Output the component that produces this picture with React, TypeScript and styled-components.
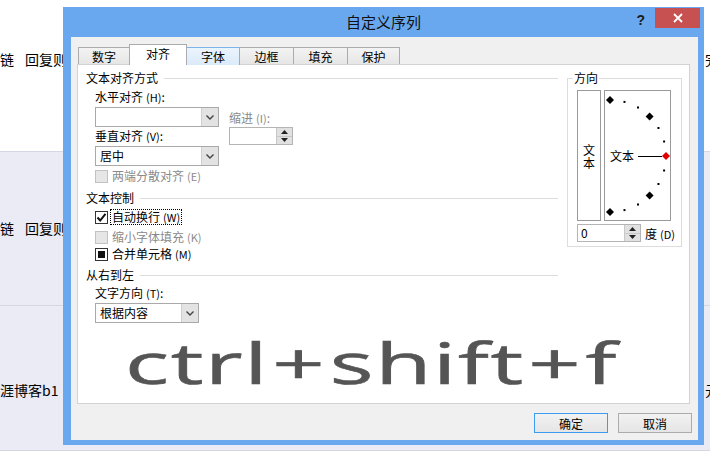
import React from "react";
import styled, { createGlobalStyle, css } from "styled-components";

const GlobalStyle = createGlobalStyle`
  html, body { margin: 0; padding: 0; }
  body {
    font-family: "Noto Sans CJK SC", "Noto Sans", sans-serif;
    font-size: 12px;
    color: #000;
  }
`;

const Desktop = styled.div`
  position: relative;
  width: 710px;
  height: 451px;
  overflow: hidden;
  display: flex;
  flex-direction: column;
  background: #eaebf4;
`;

const SheetRow = styled.div<{ $h?: number; $bg: string; $top: number }>`
  ${p => (p.$h ? css`height: ${p.$h}px;` : css`flex: 1;`)}
  flex-shrink: 0;
  background: ${p => p.$bg};
  border-bottom: 1px solid #d4d7e3;
  display: flex;
  justify-content: space-between;
  padding-top: ${p => p.$top}px;
  box-sizing: border-box;
  font-size: 14px;
  line-height: 18px;
`;

const Cell = styled.div`
  display: flex;
  gap: 11px;
  white-space: nowrap;
`;

const Edge = styled.div`
  width: 5px;
  overflow: hidden;
  white-space: nowrap;
`;

/* dialog window */
const Window = styled.div`
  position: absolute;
  left: 63px;
  top: 7px;
  width: 641px;
  height: 438px;
  background: #69a8ef;
  display: flex;
  flex-direction: column;
`;

const TitleBar = styled.div`
  height: 30px;
  flex-shrink: 0;
  display: grid;
  grid-template-columns: 1fr auto 1fr;
  align-items: start;
`;

const Title = styled.div`
  font-size: 15px;
  line-height: 30px;
  color: #111;
`;

const Controls = styled.div`
  display: flex;
  justify-content: flex-end;
  align-items: flex-start;
  padding-right: 4px;
`;

const Help = styled.div`
  font-family: "Liberation Sans", sans-serif;
  font-weight: bold;
  font-size: 14px;
  line-height: 26px;
  color: #1a1a1a;
  margin-right: 10px;
`;

const Close = styled.div`
  width: 45px;
  height: 20px;
  margin-top: 1px;
  background: #c75050;
  display: flex;
  align-items: center;
  justify-content: center;
`;

const Client = styled.div`
  flex: 1;
  margin: 0 6px 5px 8px;
  background: #f0f0f0;
  padding: 7px 8px 0 6px;
  display: flex;
  flex-direction: column;
`;

const TabRow = styled.div`
  display: flex;
  align-items: flex-end;
  height: 21px;
  margin-bottom: -1px;
  padding-left: 1px;
`;

const Tab = styled.div<{ $w: number; $state?: "active" | "hover" }>`
  width: ${p => p.$w}px;
  height: 18px;
  box-sizing: border-box;
  border: 1px solid #acacac;
  border-bottom: none;
  margin-right: -1px;
  display: flex;
  align-items: center;
  justify-content: center;
  padding-bottom: 1px;
  background: linear-gradient(#f3f3f3, #e5e5e5);
  ${p =>
    p.$state === "hover" &&
    css`
      background: linear-gradient(#eaf4fd, #dbeafa);
      border-color: #7eb4ea;
      position: relative;
      z-index: 1;
    `}
  ${p =>
    p.$state === "active" &&
    css`
      height: 21px;
      background: #fff;
      position: relative;
      z-index: 2;
      padding-bottom: 3px;
    `}
`;

const Panel = styled.div`
  width: 613px;
  height: 340px;
  box-sizing: border-box;
  border: 1px solid #d3d3d3;
  background: #fff;
  display: flex;
  padding: 6px 7px 0 8px;
  overflow: hidden;
`;

const LeftCol = styled.div`
  width: 472px;
  display: flex;
  flex-direction: column;
`;

const GroupTitle = styled.div<{ $mt?: number }>`
  display: flex;
  align-items: center;
  height: 14px;
  line-height: 14px;
  margin-top: ${p => p.$mt ?? 0}px;
  &::after {
    content: "";
    flex: 1;
    height: 1px;
    background: #dcdcdc;
    margin-left: 6px;
  }
`;

const Label = styled.div<{ $mt?: number; $disabled?: boolean }>`
  height: 14px;
  line-height: 14px;
  margin-top: ${p => p.$mt ?? 0}px;
  color: ${p => (p.$disabled ? "#8a8a8a" : "#000")};
  white-space: nowrap;
`;

const Key = styled.span`
  font-size: 11px;
  margin-left: 3px;
`;

const Indent = styled.div`
  padding-left: 9px;
  display: flex;
  flex-direction: column;
`;

const AlignBlock = styled.div`
  display: flex;
  gap: 10px;
  margin-top: 5px;
`;

const Stack = styled.div<{ $pt?: number }>`
  display: flex;
  flex-direction: column;
  padding-top: ${p => p.$pt ?? 0}px;
`;

const Select = styled.div<{ $w: number; $mt?: number }>`
  width: ${p => p.$w}px;
  height: 20px;
  margin-top: ${p => p.$mt ?? 0}px;
  box-sizing: border-box;
  border: 1px solid #a9a9a9;
  background: #fff;
  display: flex;
  align-items: stretch;
`;

const SelectText = styled.div`
  flex: 1;
  padding-left: 4px;
  line-height: 18px;
  font-size: 12px;
`;

const SelectArrow = styled.div`
  width: 16px;
  background: #e3e3e3;
  border-left: 1px solid #cfcfcf;
  display: flex;
  align-items: center;
  justify-content: center;
`;

const Spinner = styled.div<{ $w: number; $mt?: number }>`
  width: ${p => p.$w}px;
  height: 18px;
  margin-top: ${p => p.$mt ?? 0}px;
  box-sizing: border-box;
  border: 1px solid #b4b4b4;
  background: #fff;
  display: flex;
`;

const SpinText = styled.div`
  flex: 1;
  padding-left: 3px;
  line-height: 16px;
`;

const SpinButtons = styled.div`
  width: 15px;
  display: flex;
  flex-direction: column;
  background: #e1e1e1;
  border-left: 1px solid #c8c8c8;
`;

const SpinHalf = styled.div`
  flex: 1;
  display: flex;
  align-items: center;
  justify-content: center;
  & + & {
    border-top: 1px solid #c8c8c8;
  }
`;

const CheckRow = styled.div<{ $mt?: number }>`
  display: flex;
  align-items: center;
  height: 16px;
  margin-top: ${p => p.$mt ?? 0}px;
`;

const Box = styled.div<{ $disabled?: boolean }>`
  width: 13px;
  height: 13px;
  box-sizing: border-box;
  border: 1px solid ${p => (p.$disabled ? "#c2c2c2" : "#333")};
  background: ${p => (p.$disabled ? "#e6e6e6" : "#fff")};
  display: flex;
  align-items: center;
  justify-content: center;
  margin-right: 2px;
`;

const Square = styled.div`
  width: 7px;
  height: 7px;
  background: #111;
`;

const CheckText = styled.div<{ $disabled?: boolean; $focus?: boolean }>`
  line-height: 14px;
  padding: 0 1px;
  color: ${p => (p.$disabled ? "#8a8a8a" : "#000")};
  border: 1px dotted ${p => (p.$focus ? "#000" : "transparent")};
  white-space: nowrap;
`;

const BigText = styled.div`
  font-family: "Open Sans", "Liberation Sans", sans-serif;
  font-weight: 400;
  font-size: 56px;
  line-height: 55px;
  color: #555;
  margin-top: 12px;
  margin-left: 39px;
  white-space: nowrap;
  letter-spacing: 1px;
  transform: scaleX(1.64);
  transform-origin: left center;
  -webkit-text-stroke: 0.6px #555;
`;

const Plus = styled.span`
  margin: 0 2px;
`;

/* orientation group */
const Orientation = styled.fieldset`
  width: 115px;
  height: 176px;
  box-sizing: border-box;
  margin: 0 0 0 9px;
  padding: 0 0 0 9px;
  border: 1px solid #dcdcdc;
  min-width: 0;
`;

const Legend = styled.legend`
  padding: 0 1px;
  margin-left: -4px;
  line-height: 14px;
`;

const DialRow = styled.div`
  display: flex;
  gap: 3px;
  margin-top: 5px;
`;

const VerticalBox = styled.div`
  width: 24px;
  height: 131px;
  box-sizing: border-box;
  border: 1px solid #9a9a9a;
  display: flex;
  flex-direction: column;
  align-items: center;
  justify-content: center;
  padding-top: 2px;
  gap: 1px;
  & > span {
    line-height: 12px;
    height: 12px;
    font-size: 12px;
  }
`;

const DialBox = styled.div`
  width: 67px;
  height: 131px;
  box-sizing: border-box;
  border: 1px solid #9a9a9a;
`;

const DegreeRow = styled.div`
  display: flex;
  align-items: center;
  gap: 4px;
  margin-top: 3px;
`;

const ButtonRow = styled.div`
  display: flex;
  justify-content: flex-end;
  gap: 10px;
  margin-top: 9px;
  margin-right: -2px;
`;

const Button = styled.div<{ $default?: boolean }>`
  width: 74px;
  height: 20px;
  box-sizing: border-box;
  border: 1px solid ${p => (p.$default ? "#3c9cf0" : "#acacac")};
  background: linear-gradient(#f2f2f2, #e5e5e5);
  display: flex;
  align-items: center;
  justify-content: center;
`;

const Chevron = () => (
  <svg width="8" height="5" viewBox="0 0 8 5">
    <path d="M0.5 0.5 L4 4 L7.5 0.5" fill="none" stroke="#444" strokeWidth="1.4" />
  </svg>
);

const Tri = ({ up }: { up?: boolean }) => (
  <svg width="7" height="4" viewBox="0 0 7 4">
    <path d={up ? "M0 4 L3.5 0 L7 4 Z" : "M0 0 L3.5 4 L7 0 Z"} fill="#222" />
  </svg>
);

const Check = () => (
  <svg width="11" height="11" viewBox="0 0 11 11">
    <path d="M1.5 5.5 L4.2 8.5 L9.5 1.8" fill="none" stroke="#111" strokeWidth="2" />
  </svg>
);

const Dial = () => {
  const cx = 5;
  const cy = 65;
  const r = 56;
  const marks = [];
  for (let a = 90; a >= -90; a -= 15) {
    const rad = (a * Math.PI) / 180;
    const x = cx + r * Math.cos(rad);
    const y = cy - r * Math.sin(rad);
    if (a % 45 === 0) {
      const c = a === 0 ? "#e00000" : "#000";
      marks.push(
        <path key={a} d={`M${x} ${y - 4} L${x + 4} ${y} L${x} ${y + 4} L${x - 4} ${y} Z`} fill={c} />
      );
    } else {
      marks.push(<rect key={a} x={x - 1} y={y - 1} width="2" height="2" fill="#000" />);
    }
  }
  return (
    <svg width="65" height="129" viewBox="0 0 65 129">
      <text x="5" y="70" fontSize="12" fontFamily="Noto Sans CJK SC, sans-serif">文本</text>
      <line x1="33" y1="65.5" x2="57" y2="65.5" stroke="#000" strokeWidth="1" />
      {marks}
    </svg>
  );
};

const SpinControl = ({ w, mt, value }: { w: number; mt?: number; value?: string }) => (
  <Spinner $w={w} $mt={mt}>
    <SpinText>{value}</SpinText>
    <SpinButtons>
      <SpinHalf>
        <Tri up />
      </SpinHalf>
      <SpinHalf>
        <Tri />
      </SpinHalf>
    </SpinButtons>
  </Spinner>
);

const Dropdown = ({ w, mt, value }: { w: number; mt?: number; value?: string }) => (
  <Select $w={w} $mt={mt}>
    <SelectText>{value}</SelectText>
    <SelectArrow>
      <Chevron />
    </SelectArrow>
  </Select>
);

const tabs: { label: string; w: number; state?: "active" | "hover" }[] = [
  { label: "数字", w: 52 },
  { label: "对齐", w: 58, state: "active" },
  { label: "字体", w: 54, state: "hover" },
  { label: "边框", w: 55 },
  { label: "填充", w: 55 },
  { label: "保护", w: 53 },
];

export default function App() {
  return (
    <>
      <GlobalStyle />
      <Desktop>
        <SheetRow $h={152} $bg="#fff" $top={50}>
          <Cell>
            <span>链</span>
            <span>回复则</span>
          </Cell>
          <Edge>完</Edge>
        </SheetRow>
        <SheetRow $h={154} $bg="#eaebf4" $top={67}>
          <Cell>
            <span>链</span>
            <span>回复则</span>
          </Cell>
          <Edge></Edge>
        </SheetRow>
        <SheetRow $bg="#eaebf4" $top={75}>
          <Cell>
            <span>涯博客b1</span>
          </Cell>
          <Edge>元</Edge>
        </SheetRow>

        <Window>
          <TitleBar>
            <span />
            <Title>自定义序列</Title>
            <Controls>
              <Help>?</Help>
              <Close>
                <svg width="10" height="10" viewBox="0 0 10 10">
                  <path d="M1 1 L9 9 M9 1 L1 9" stroke="#fff" strokeWidth="1.8" />
                </svg>
              </Close>
            </Controls>
          </TitleBar>
          <Client>
            <TabRow>
              {tabs.map(t => (
                <Tab key={t.label} $w={t.w} $state={t.state}>
                  {t.label}
                </Tab>
              ))}
            </TabRow>
            <Panel>
              <LeftCol>
                <GroupTitle>文本对齐方式</GroupTitle>
                <Indent>
                  <AlignBlock>
                    <Stack>
                      <Label>
                        水平对齐<Key>(H)</Key>:
                      </Label>
                      <Dropdown w={124} mt={3} />
                      <Label $mt={2}>
                        垂直对齐<Key>(V)</Key>:
                      </Label>
                      <Dropdown w={124} mt={3} value="居中" />
                    </Stack>
                    <Stack $pt={21}>
                      <Label $disabled>
                        缩进<Key>(I)</Key>:
                      </Label>
                      <SpinControl w={64} mt={2} />
                    </Stack>
                  </AlignBlock>
                  <CheckRow $mt={2}>
                    <Box $disabled />
                    <CheckText $disabled>
                      两端分散对齐<Key>(E)</Key>
                    </CheckText>
                  </CheckRow>
                </Indent>
                <GroupTitle $mt={7}>文本控制</GroupTitle>
                <Indent>
                  <CheckRow $mt={4}>
                    <Box>
                      <Check />
                    </Box>
                    <CheckText $focus>
                      自动换行<Key>(W)</Key>
                    </CheckText>
                  </CheckRow>
                  <CheckRow $mt={4}>
                    <Box $disabled />
                    <CheckText $disabled>
                      缩小字体填充<Key>(K)</Key>
                    </CheckText>
                  </CheckRow>
                  <CheckRow $mt={1}>
                    <Box>
                      <Square />
                    </Box>
                    <CheckText>
                      合并单元格<Key>(M)</Key>
                    </CheckText>
                  </CheckRow>
                </Indent>
                <GroupTitle $mt={6}>从右到左</GroupTitle>
                <Indent>
                  <Label $mt={4}>
                    文字方向<Key>(T)</Key>:
                  </Label>
                  <Dropdown w={104} mt={3} value="根据内容" />
                </Indent>
                <BigText>
                  ctrl<Plus>+</Plus>shift<Plus>+</Plus>f
                </BigText>
              </LeftCol>
              <Orientation>
                <Legend>方向</Legend>
                <DialRow>
                  <VerticalBox>
                    <span>文</span>
                    <span>本</span>
                  </VerticalBox>
                  <DialBox>
                    <Dial />
                  </DialBox>
                </DialRow>
                <DegreeRow>
                  <SpinControl w={64} value="0" />
                  <span>
                    度<Key>(D)</Key>
                  </span>
                </DegreeRow>
              </Orientation>
            </Panel>
            <ButtonRow>
              <Button $default>确定</Button>
              <Button>取消</Button>
            </ButtonRow>
          </Client>
        </Window>
      </Desktop>
    </>
  );
}
